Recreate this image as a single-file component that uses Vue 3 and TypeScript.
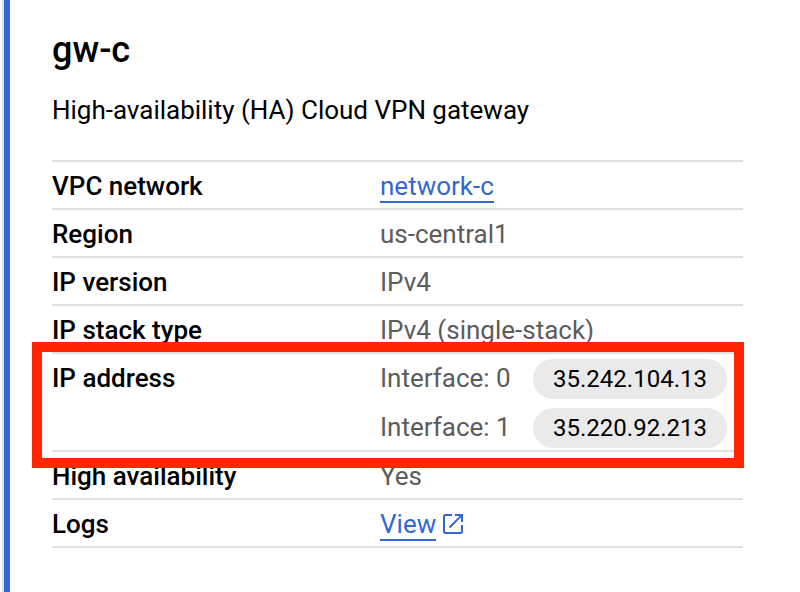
<script setup lang="ts">
interface Row {
  label: string
  value?: string
  link?: boolean
  external?: boolean
  interfaces?: { name: string; address: string }[]
}

const rows: Row[] = [
  { label: 'VPC network', value: 'network-c', link: true },
  { label: 'Region', value: 'us-central1' },
  { label: 'IP version', value: 'IPv4' },
  { label: 'IP stack type', value: 'IPv4 (single-stack)' },
  {
    label: 'IP address',
    interfaces: [
      { name: 'Interface: 0', address: '35.242.104.13' },
      { name: 'Interface: 1', address: '35.220.92.213' },
    ],
  },
  { label: 'High availability', value: 'Yes' },
  { label: 'Logs', value: 'View', link: true, external: true },
]
</script>

<template>
  <main class="panel">
    <h1 class="title">gw-c</h1>
    <p class="subtitle">High-availability (HA) Cloud VPN gateway</p>
    <dl class="details">
      <div v-for="row in rows" :key="row.label" class="row">
        <dt class="label">{{ row.label }}</dt>
        <dd v-if="row.interfaces" class="interfaces">
          <div v-for="item in row.interfaces" :key="item.name" class="interface">
            <span class="name">{{ item.name }}</span>
            <span class="chip">{{ item.address }}</span>
          </div>
        </dd>
        <dd v-else class="value">
          <a v-if="row.link" class="link">{{ row.value }}</a>
          <span v-else>{{ row.value }}</span>
          <svg v-if="row.external" class="external" viewBox="0 0 20 20" aria-hidden="true">
            <path d="M9 1H2.5Q1 1 1 2.5V17.5Q1 19 2.5 19H17.5Q19 19 19 17.5V11M12 1H19V8M18.6 1.4L6.5 13.5" />
          </svg>
        </dd>
        <div v-if="row.interfaces" class="highlight"></div>
      </div>
    </dl>
  </main>
</template>

<style>
body {
  margin: 0;
  background: #fff;
}
</style>

<style scoped>
.panel {
  box-sizing: border-box;
  width: 798px;
  height: 592px;
  margin-left: 2px;
  padding: 28px 57px 0 48px;
  border-left: 2px solid #e0e0e0;
  box-shadow: inset 6px 0 #3367d6;
  font: 400 26px/46px Roboto, "Liberation Sans", sans-serif;
  color: #000;
}
.title {
  margin: 0;
  font-size: 36px;
  font-weight: 500;
  line-height: 44px;
}
.subtitle {
  margin: 15px 0 0;
  line-height: 46px;
  letter-spacing: -0.01px;
}
.details {
  margin: 27px 0 0;
  border-top: 2px solid #e0e0e0;
}
.row {
  position: relative;
  display: grid;
  grid-template-columns: 328px 1fr;
  border-bottom: 2px solid #e0e0e0;
}
.label {
  height: 46px;
  font-weight: 500;
  line-height: 48px;
}
.value {
  display: flex;
  align-items: flex-start;
  height: 46px;
  margin: 0;
  line-height: 48px;
  color: #5c5c5c;
}
.link {
  height: 39px;
  border-bottom: 2px solid #3367d6;
  color: #3367d6;
}
.external {
  width: 20px;
  height: 20px;
  margin: 14px 0 0 7px;
  fill: none;
  stroke: #3367d6;
  stroke-width: 2;
}
.interfaces {
  display: flex;
  flex-direction: column;
  gap: 9px;
  margin: 0;
  padding: 5px 0 2px;
}
.interface {
  display: grid;
  grid-template-columns: 153px 194px;
  height: 40px;
}
.name {
  line-height: 38px;
  color: #5c5c5c;
}
.chip {
  border-radius: 20px;
  background: #eaeaea;
  font-size: 24px;
  line-height: 40px;
  text-align: center;
}
.highlight {
  position: absolute;
  z-index: 1;
  top: -12px;
  right: -1px;
  bottom: -18px;
  left: -20px;
  border: 10px solid #ff2600;
}
</style>
